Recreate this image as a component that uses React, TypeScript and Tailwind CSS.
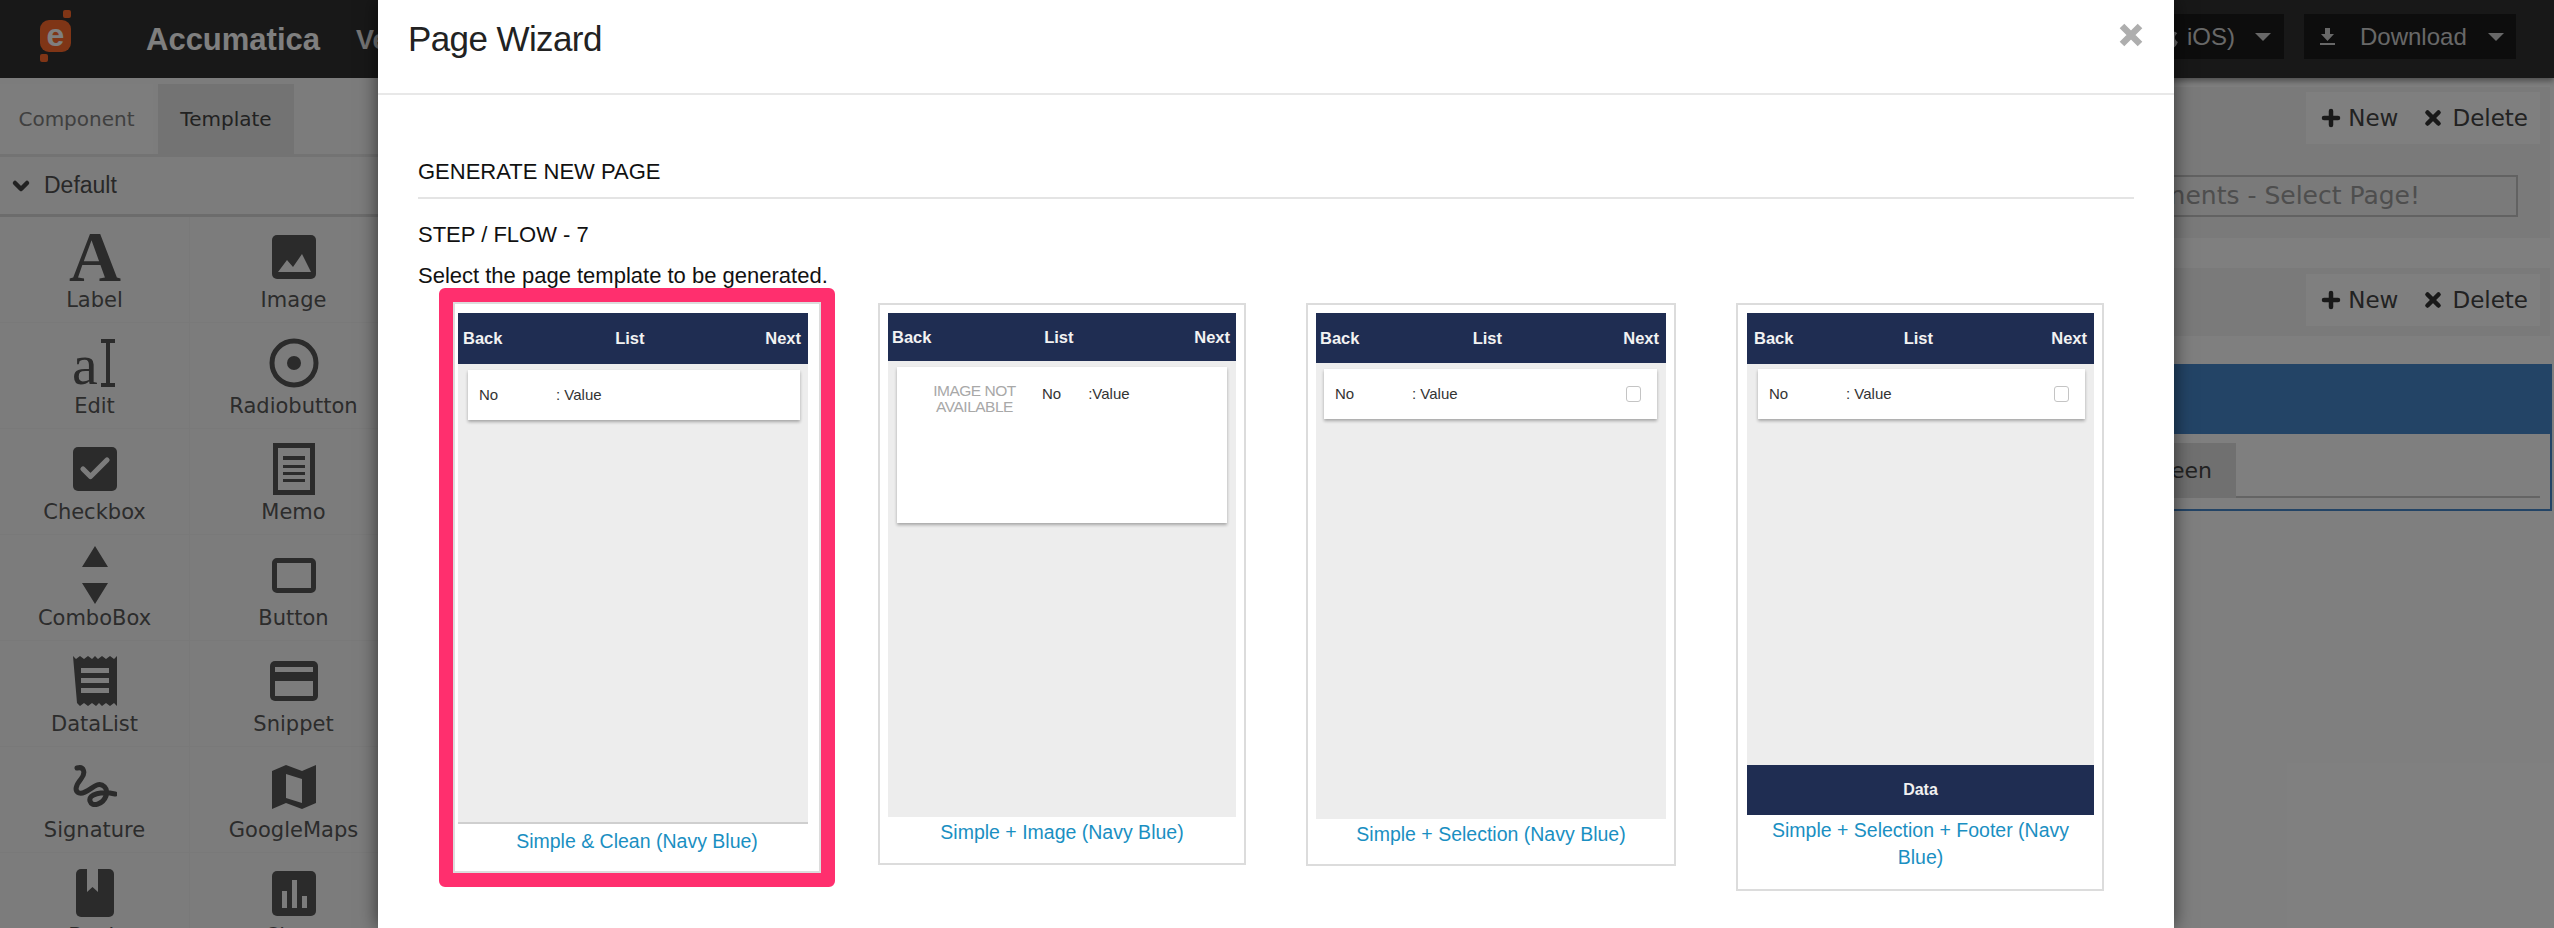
import { Check, ChevronDown, Plus, X } from 'lucide-react';
import { FaApple } from 'react-icons/fa';
import type { ReactNode } from 'react';

const ink = '#565656';

const LabelIcon = () => (
  <svg width="58" height="54" viewBox="0 0 58 54">
    <text x="29" y="51" textAnchor="middle" fontFamily="Liberation Serif" fontWeight="700" fontSize="72" fill={ink}>A</text>
  </svg>
);

const ImageIcon = () => (
  <svg width="44" height="44" viewBox="0 0 44 44">
    <rect width="44" height="44" rx="5" fill={ink} />
    <path d="M6 37l9-12 6 7 9-13 9 18z" fill="#f8f8f8" />
  </svg>
);

const EditIcon = () => (
  <svg width="44" height="54" viewBox="0 0 44 54">
    <text x="-1" y="48" fontFamily="Liberation Serif" fontSize="58" fill={ink}>a</text>
    <path d="M28 3h14v4h-5v40h5v4H28v-4h5V7h-5z" fill={ink} />
  </svg>
);

const RadioIcon = () => (
  <svg width="50" height="50" viewBox="0 0 50 50">
    <circle cx="25" cy="25" r="22" fill="none" stroke={ink} strokeWidth="5" />
    <circle cx="25" cy="25" r="7" fill={ink} />
  </svg>
);

const CheckboxIcon = () => (
  <div className="flex h-[44px] w-[44px] items-center justify-center rounded-[5px] bg-[#565656]">
    <Check size={36} color="#f8f8f8" strokeWidth={3.5} />
  </div>
);

const MemoIcon = () => (
  <svg width="42" height="52" viewBox="0 0 42 52">
    <rect x="2.5" y="2.5" width="37" height="47" fill="none" stroke={ink} strokeWidth="5" />
    <path d="M10 13h22v4H10zM10 22h22v3H10zM10 29h22v3H10zM10 36h22v3H10z" fill={ink} />
  </svg>
);

const ComboIcon = () => (
  <svg width="26" height="58" viewBox="0 0 26 58">
    <path d="M13 0l13 21H0zM0 37h26L13 58z" fill={ink} />
  </svg>
);

const ButtonIcon = () => <div className="h-[35px] w-[44px] rounded-[5px] border-[5px] border-[#565656]" />;

const DataListIcon = () => (
  <svg width="44" height="50" viewBox="0 0 44 50">
    <path d="M0 0l3 3 4-3 4 3 4-3 4 3 3-3 3 3 4-3 4 3 4-3 4 3 3-3v50l-3-3-4 3-4-3-4 3-3-3-3 3-4-3-4 3-4-3-4 3-3-3z" fill={ink} />
    <path d="M8 12h28v5H8zM8 22h28v5H8zM8 32h28v5H8z" fill="#f8f8f8" />
  </svg>
);

const SnippetIcon = () => (
  <svg width="48" height="40" viewBox="0 0 48 40">
    <rect width="48" height="40" rx="5" fill={ink} />
    <rect x="5" y="6" width="38" height="5" fill="#f8f8f8" />
    <rect x="5" y="20" width="38" height="15" fill="#f8f8f8" />
  </svg>
);

const SignatureIcon = () => (
  <svg width="44" height="44" viewBox="0 0 44 44">
    <path d="M4 3c7-2 9 5 4 11S1 26 6 28s13-6 18-8 12 3 9 11-14 12-16 5 12-10 25-7" fill="none" stroke={ink} strokeWidth="5" strokeLinecap="round" />
  </svg>
);

const MapIcon = () => (
  <svg width="44" height="44" viewBox="0 0 44 44">
    <path d="M0 6l14-6 16 6 14-6v38l-14 6-16-6-14 6zM14 9v24l16 5V14z" fill={ink} fillRule="evenodd" />
  </svg>
);

const BookIcon = () => (
  <svg width="38" height="48" viewBox="0 0 38 48">
    <rect width="38" height="48" rx="5" fill={ink} />
    <path d="M11 0h11v23l-5.500-5L11 23z" fill="#f8f8f8" />
  </svg>
);

const ChartIcon = () => (
  <svg width="44" height="45" viewBox="0 0 44 45">
    <rect width="44" height="45" rx="5" fill={ink} />
    <path d="M10 20h5v17h-5zM20 9h5v28h-5zM30 25h5v12h-5z" fill="#f8f8f8" />
  </svg>
);

const widgets: { label: string; icon: ReactNode }[] = [
  { label: 'Label', icon: <LabelIcon /> },
  { label: 'Image', icon: <ImageIcon /> },
  { label: 'Edit', icon: <EditIcon /> },
  { label: 'Radiobutton', icon: <RadioIcon /> },
  { label: 'Checkbox', icon: <CheckboxIcon /> },
  { label: 'Memo', icon: <MemoIcon /> },
  { label: 'ComboBox', icon: <ComboIcon /> },
  { label: 'Button', icon: <ButtonIcon /> },
  { label: 'DataList', icon: <DataListIcon /> },
  { label: 'Snippet', icon: <SnippetIcon /> },
  { label: 'Signature', icon: <SignatureIcon /> },
  { label: 'GoogleMaps', icon: <MapIcon /> },
  { label: 'Book', icon: <BookIcon /> },
  { label: 'Chart', icon: <ChartIcon /> },
];

const Sidebar = () => (
  <div className="w-[398px] shrink-0 bg-[#f8f8f8]">
    <div className="flex h-[79px] items-end border-b-[3px] border-[#e6e6e6] font-['DejaVu_Sans',sans-serif] text-[20px]">
      <div className="flex h-[70px] w-[153px] items-center justify-center bg-[#fafafa] text-[#808080]">Component</div>
      <div className="ml-[5px] flex h-[70px] w-[136px] items-center justify-center bg-[#e6e6e6] text-[#444]">Template</div>
    </div>
    <div className="flex h-[60px] items-center border-b-[3px] border-[#d8d8d8] pl-[9px] font-['Liberation_Sans',sans-serif] text-[23px] text-[#505050]">
      <ChevronDown size={24} strokeWidth={4.5} color="#444" />
      <span className="ml-[11px]">Default</span>
    </div>
    <div className="grid grid-cols-[190px_208px]">
      {widgets.map((w) => (
        <div key={w.label} className="flex h-[106px] flex-col items-center border-b border-r border-[#f2f2f2] pt-[10px]">
          <div className="flex h-[60px] items-center justify-center">{w.icon}</div>
          <div className="h-[26px] font-['DejaVu_Sans',sans-serif] text-[21px] leading-[26px] text-[#585858]">{w.label}</div>
        </div>
      ))}
    </div>
  </div>
);

const Actions = () => (
  <div className="flex h-[52px] items-center gap-[12px] bg-[#ffffff] pl-[13px] pr-[12px] font-['DejaVu_Sans',sans-serif] text-[23px] text-[#444]">
    <Plus size={24} strokeWidth={4.5} color="#333" />
    <span className="-ml-[7px]">New</span>
    <X size={22} strokeWidth={5} color="#333" className="ml-[12px]" />
    <span className="-ml-[4px]">Delete</span>
  </div>
);

const RightPanels = () => (
  <div className="flex flex-1 flex-col pr-[2px] font-['DejaVu_Sans',sans-serif]">
    <div className="mr-[2px] mt-[9px] h-[151px] bg-[#f4f4f4] pt-[5px]">
      <div className="flex justify-end pr-[10px]">
        <Actions />
      </div>
      <div className="mr-[32px] mt-[31px] flex h-[42px] items-center justify-end border-2 border-[#c4c4c4] pr-[96px] text-[25px] text-[#9c9c9c]">
        Components - Select Page!
      </div>
    </div>
    <div className="mr-[2px] mt-[30px] flex h-[68px] justify-end bg-[#f4f4f4] pr-[10px] pt-[6px]">
      <Actions />
    </div>
    <div className="mt-[28px] h-[70px] bg-[#4688cc]" />
    <div className="flex h-[77px] items-start border-x-2 border-b-2 border-[#4688cc] pl-[1656px] pr-[10px] pt-[9px]">
      <div className="flex h-[55px] w-[180px] items-center justify-end bg-[#e0e0e0] pr-[24px] text-[22px] text-[#444]">Screen</div>
      <div className="h-[55px] flex-1 border-b-2 border-[#c8c8c8]" />
    </div>
  </div>
);

const TopBar = () => (
  <div className="flex h-[78px] items-start bg-[#303030] font-['Liberation_Sans',sans-serif] shadow-[0_3px_6px_rgba(0,0,0,0.4)]">
    <svg width="40" height="52" viewBox="0 0 40 52" className="ml-[36px] mt-[10px] shrink-0">
      <rect x="27" y="0" width="8" height="8" rx="2" fill="#ff6a2c" />
      <rect x="4" y="44" width="8" height="8" rx="2" fill="#ff6a2c" />
      <rect x="4" y="10" width="31" height="32" rx="9" fill="#ff6a2c" />
      <text x="19.500" y="36" textAnchor="middle" fontFamily="Liberation Sans" fontWeight="700" fontSize="32" fill="#fff">e</text>
    </svg>
    <div className="ml-[70px] mt-[22px] text-[31px] font-bold leading-[36px] text-[#fff]">Accumatica</div>
    <div className="ml-[36px] mt-[24px] text-[27px] font-bold leading-[32px] text-[#e8e8e8]">Version</div>
    <div className="flex-1" />
    <div className="mt-[14px] flex h-[45px] items-center bg-[#1a1a1a] pl-[6px] pr-[13px] text-[24px] text-[#d0d0d0]">
      <FaApple size={24} color="#d0d0d0" />
      <span className="ml-[6px]">iOS)</span>
      <span className="ml-[20px] h-0 w-0 border-x-[8px] border-t-[8px] border-x-transparent border-t-[#d0d0d0]" />
    </div>
    <div className="ml-[20px] mt-[14px] flex h-[45px] w-[212px] items-center bg-[#1a1a1a] pl-[16px] text-[24px] text-[#d0d0d0]">
      <svg width="15" height="18" viewBox="0 0 15 18" className="shrink-0">
        <path d="M5 0h5v6h4l-6.500 7L1 6h4zM0 15h15v2H0z" fill="#d0d0d0" />
      </svg>
      <span className="ml-[25px]">Download</span>
      <span className="ml-[21px] h-0 w-0 border-x-[8px] border-t-[8px] border-x-transparent border-t-[#d0d0d0]" />
    </div>
    <div className="w-[38px]" />
  </div>
);

type PhoneProps = {
  wrap: string;
  screen: string;
  bar: string;
  back: string;
  box: string;
  caption: string;
  title: string;
  check?: boolean;
  footer?: boolean;
  picture?: boolean;
};

const PhoneCard = ({ wrap, screen, bar, back, box, caption, title, check, footer, picture }: PhoneProps) => (
  <div className={wrap}>
    <div className={screen}>
      <div className={bar}>
        <span className={back}>Back</span>
        <span>List</span>
        <span>Next</span>
      </div>
      <div className={box}>
        {picture ? (
          <div className="flex items-start pl-[35px] pt-[16px] text-[15px] text-[#333]">
            <div className="w-[110px] text-center text-[15.500px] font-light leading-[16px] tracking-[-0.5px] text-[#a8a8a8]">
              <div className="w-[85px]">IMAGE NOT</div>
              <div className="w-[85px]">AVAILABLE</div>
            </div>
            <span>No</span>
            <span className="ml-[27px]">:Value</span>
          </div>
        ) : (
          <div className="flex h-full items-center pl-[11px] pr-[16px] text-[15px] text-[#333]">
            <span className="w-[77px]">No</span>
            <span className="flex-1">: Value</span>
            {check && <span className="h-[16px] w-[15px] rounded-[3px] border border-[#c4c4c4] bg-white" />}
          </div>
        )}
      </div>
      {footer && (
        <div className="mt-auto flex h-[50px] items-center justify-center bg-[#1f2d52] text-[16px] font-bold text-[#f0f0f0]">Data</div>
      )}
    </div>
    <div className={caption}>{title}</div>
  </div>
);

const barBase = 'flex items-center justify-between bg-[#1f2d52] text-[16.500px] font-bold text-[#f2f2f2]';
const boxBase = 'bg-white shadow-[0_2px_3px_rgba(0,0,0,0.3)]';

const Modal = () => (
  <div className="absolute left-[378px] top-0 h-full w-[1796px] bg-white font-['Liberation_Sans',sans-serif] text-[#111] shadow-[0_0_18px_rgba(0,0,0,0.6)]">
    <div className="flex h-[95px] items-start justify-between border-b-2 border-[#e8e8e8] pl-[30px] pr-[31px]">
      <div className="mt-[18px] text-[35px] font-light leading-[42px] tracking-[-0.6px] text-[#222]">Page Wizard</div>
      <svg width="24" height="24" viewBox="0 0 24 24" className="mt-[23px]">
        <path d="M3 3l18 18M21 3L3 21" stroke="#aeaeae" strokeWidth="6.500" />
      </svg>
    </div>
    <div className="pl-[40px] pr-[40px] text-[22px]">
      <div className="mt-[62px] h-[42px] border-b-2 border-[#e4e4e4] leading-[30px]">GENERATE NEW PAGE</div>
      <div className="mt-[21px] leading-[30px]">STEP / FLOW - 7</div>
      <div className="mt-[13px] h-[26px] leading-[26px]">Select the page template to be generated.</div>
      <div className="-mt-px ml-[21px] flex items-start">
        <div className="rounded-[6px] border-[14px] border-[#ff2f6e]">
          <PhoneCard
            wrap="w-[368px] border-2 border-[#dcdcdc] bg-white pb-[16px] pl-[3px] pt-[9px]"
            screen="flex h-[511px] w-[350px] flex-col border-b-2 border-[#cfcfcf] bg-[#ededed]"
            bar={`${barBase} h-[51px] pl-[5px] pr-[7px]`}
            back="mr-[-8px]"
            box={`${boxBase} ml-[10px] mt-[6px] h-[50px] w-[332px]`}
            caption="ml-[-3px] mt-[3px] text-center text-[19.500px] leading-[28px] text-[#1a8fc2]"
            title="Simple & Clean (Navy Blue)"
          />
        </div>
        <PhoneCard
          wrap="ml-[43px] mt-[15px] w-[368px] border-2 border-[#dcdcdc] bg-white pb-[17px] pl-[8px] pt-[8px]"
          screen="flex h-[504px] w-[348px] flex-col bg-[#ededed]"
          bar={`${barBase} h-[48px] pl-[4px] pr-[6px]`}
          back="mr-[-8px]"
          box={`${boxBase} ml-[9px] mt-[6px] h-[156px] w-[330px]`}
          caption="ml-[-8px] mt-[1px] text-center text-[19.500px] leading-[28px] text-[#1a8fc2]"
          title="Simple + Image (Navy Blue)"
          picture
        />
        <PhoneCard
          wrap="ml-[60px] mt-[15px] w-[370px] border-2 border-[#dcdcdc] bg-white pb-[16px] pl-[8px] pt-[8px]"
          screen="flex h-[506px] w-[350px] flex-col bg-[#ededed]"
          bar={`${barBase} h-[50px] pl-[4px] pr-[7px]`}
          back="mr-[-8px]"
          box={`${boxBase} ml-[8px] mt-[6px] h-[50px] w-[333px]`}
          caption="ml-[-8px] mt-[1px] text-center text-[19.500px] leading-[28px] text-[#1a8fc2]"
          title="Simple + Selection (Navy Blue)"
          check
        />
        <PhoneCard
          wrap="ml-[60px] mt-[15px] w-[368px] border-2 border-[#dcdcdc] bg-white pb-[18px] pl-[9px] pr-[8px] pt-[8px]"
          screen="flex h-[502px] w-[347px] flex-col bg-[#ededed]"
          bar={`${barBase} h-[51px] pl-[7px] pr-[7px]`}
          back="mr-[-8px]"
          box={`${boxBase} ml-[11px] mt-[5px] h-[50px] w-[327px]`}
          caption="mt-[2px] px-[4px] text-center text-[19.500px] leading-[27px] text-[#1a8fc2]"
          title="Simple + Selection + Footer (Navy Blue)"
          check
          footer
        />
      </div>
    </div>
  </div>
);

export default function App() {
  return (
    <div className="relative h-[928px] w-[2554px] overflow-hidden bg-white">
      <TopBar />
      <div className="flex">
        <Sidebar />
        <RightPanels />
      </div>
      <div className="absolute inset-0 bg-black/50" />
      <Modal />
    </div>
  );
}
